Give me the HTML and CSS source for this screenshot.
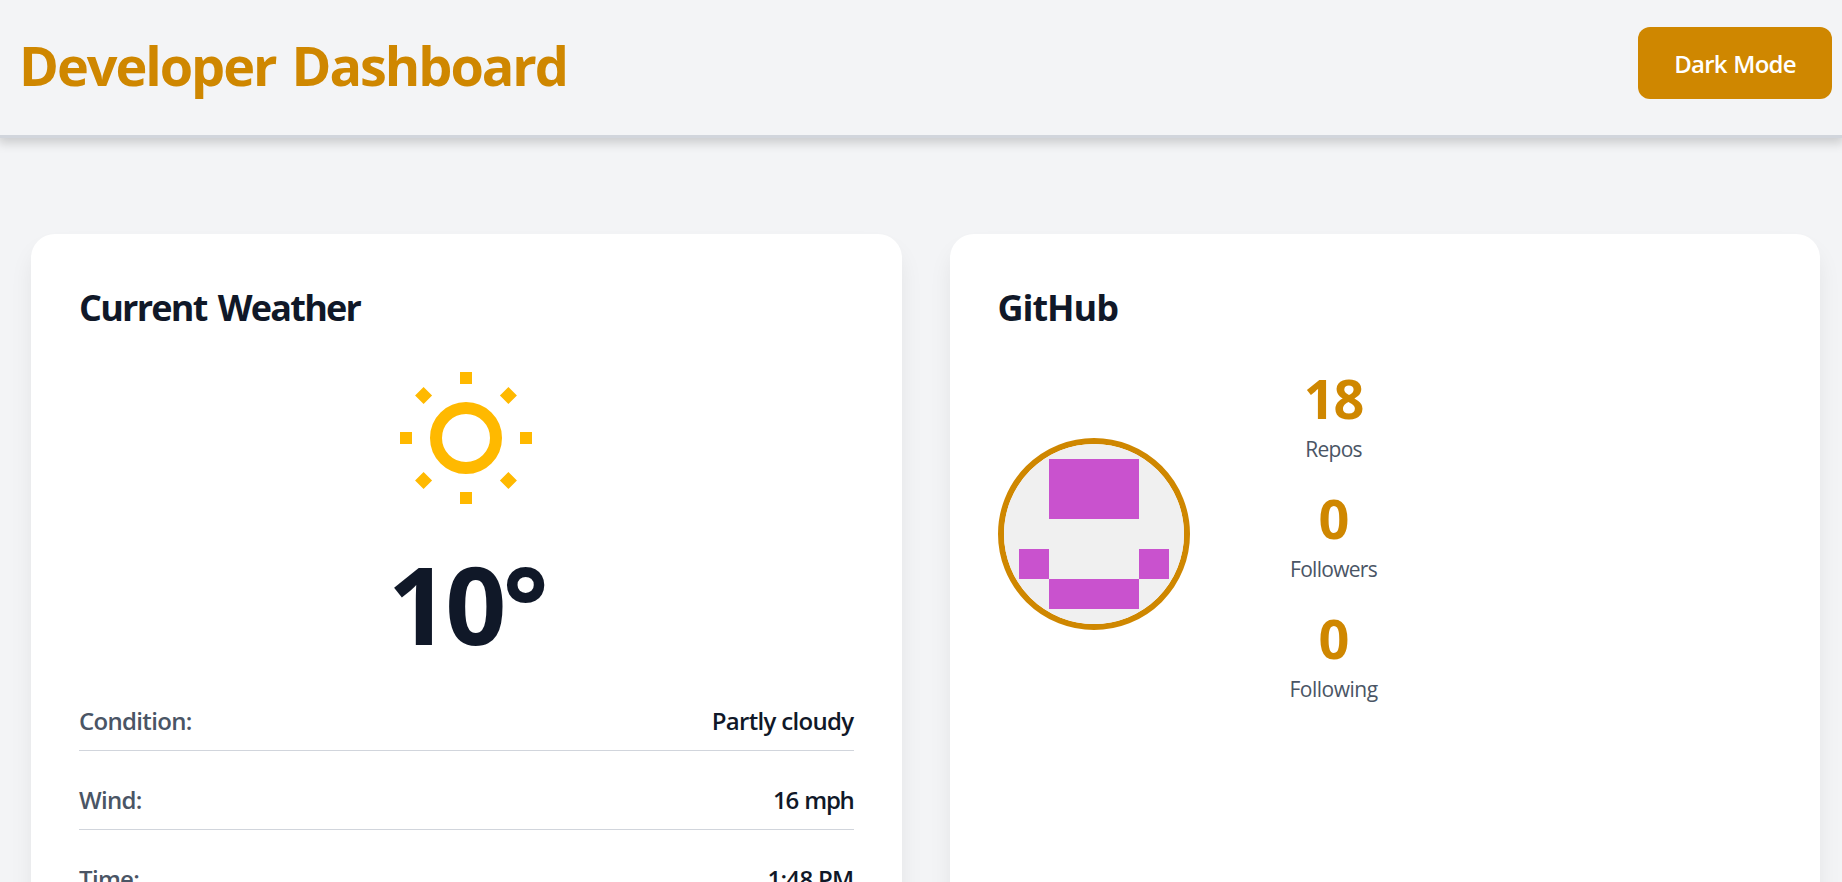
FILE: index.html
```html
<!DOCTYPE html>
<html lang="en">
<head>
<meta charset="utf-8">
<title>Developer Dashboard</title>
<link rel="stylesheet" href="styles.css">
</head>
<body>
<header class="header">
  <h1 class="title">Developer Dashboard</h1>
  <button class="theme-toggle">Dark Mode</button>
</header>
<main class="grid">
  <section class="card">
    <h2 class="card-title">Current Weather</h2>
    <svg class="sun" viewBox="0 0 24 24" fill="none" stroke="#ffb900" stroke-width="2">
      <circle cx="12" cy="12" r="5"/>
      <path d="M12 1v2M12 21v2M1 12h2M21 12h2M4.22 4.22l1.42 1.42M18.36 18.36l1.42 1.42M4.22 19.78l1.42-1.42M18.36 5.64l1.42-1.42"/>
    </svg>
    <p class="temp">10°</p>
    <div class="rows">
      <div class="row"><span class="label">Condition:</span><span class="value">Partly cloudy</span></div>
      <div class="row"><span class="label">Wind:</span><span class="value value-wind">16 mph</span></div>
      <div class="row"><span class="label">Time:</span><span class="value">1:48 PM</span></div>
    </div>
  </section>
  <section class="card">
    <h2 class="card-title card-title-github">GitHub</h2>
    <div class="profile">
      <svg class="avatar" viewBox="0 0 180 180">
        <path fill="#f0f0f0" d="M0 0h180v180H0z"/>
        <path fill="#c952ce" d="M45 15h90v60H45zM15 105h30v30H15zM135 105h30v30h-30zM45 135h90v30H45z"/>
      </svg>
      <div class="stats">
        <div class="stat"><span class="count">18</span><span class="caption">Repos</span></div>
        <div class="stat"><span class="count">0</span><span class="caption">Followers</span></div>
        <div class="stat"><span class="count">0</span><span class="caption caption-following">Following</span></div>
      </div>
    </div>
  </section>
</main>
</body>
</html>
```
FILE: styles.css
```css
* { box-sizing: border-box; margin: 0; }
html, body { height: 100%; overflow: hidden; }
body { background: #f3f4f6; color: #101828; font-family: "Open Sans", "Noto Sans", sans-serif; }
.header { display: flex; justify-content: space-between; align-items: flex-start; height: 138px; padding: 27px 10px 0 19px; border-bottom: 3px solid #d1d5dc; box-shadow: 0 3px 10px 2px rgba(0,0,0,.17); }
.title { color: #cf8700; font-size: 54px; line-height: 76px; font-weight: 700; letter-spacing: -2.05px; word-spacing: 4px; white-space: nowrap; }
.theme-toggle { width: 194px; height: 72px; padding: 2px 0 0; border: 0; border-radius: 12px; background: #cf8700; color: #fff; font: 600 24px/36px "Open Sans", "Noto Sans", sans-serif; letter-spacing: -0.75px; word-spacing: 1px; }
.grid { display: grid; grid-template-columns: 1fr 1fr; gap: 48px; padding: 96px 22px 0 31px; }
.card { height: 900px; padding: 48px; border-radius: 24px; background: #fff; box-shadow: 0 15px 24px -2px rgba(0,0,0,.08), 0 6px 9px -6px rgba(0,0,0,.06); }
.card-title { font-size: 36px; line-height: 52px; font-weight: 700; letter-spacing: -1.75px; word-spacing: 3.5px; margin-bottom: 32px; }
.card-title-github { letter-spacing: -1.05px; }
.sun { display: block; width: 144px; height: 144px; margin: 0 auto 40px; }
.temp { font-size: 107px; line-height: 108px; font-weight: 700; letter-spacing: -3.7px; text-align: center; }
.rows { display: flex; flex-direction: column; gap: 31px; margin-top: 45px; }
.row { display: flex; justify-content: space-between; padding-bottom: 11px; border-bottom: 1px solid #d1d5dc; font-size: 24px; line-height: 36px; font-weight: 600; letter-spacing: -0.68px; }
.label { color: #4a5565; }
.value-wind { letter-spacing: -1.3px; word-spacing: 1.5px; }
.profile { display: flex; align-items: flex-start; gap: 100px; }
.avatar { width: 192px; height: 192px; margin-top: 72px; border: 6px solid #cf8700; border-radius: 50%; }
.stats { display: flex; flex-direction: column; gap: 26px; padding-top: 4px; }
.stat { display: flex; flex-direction: column; align-items: center; }
.count { color: #cf8700; font-size: 54px; line-height: 56px; font-weight: 700; letter-spacing: -1px; margin-bottom: 6px; }
.caption { color: #4a5565; font-size: 21px; line-height: 34px; margin-bottom: -2px; letter-spacing: -0.7px; }
.caption-following { letter-spacing: -0.5px; }
```
